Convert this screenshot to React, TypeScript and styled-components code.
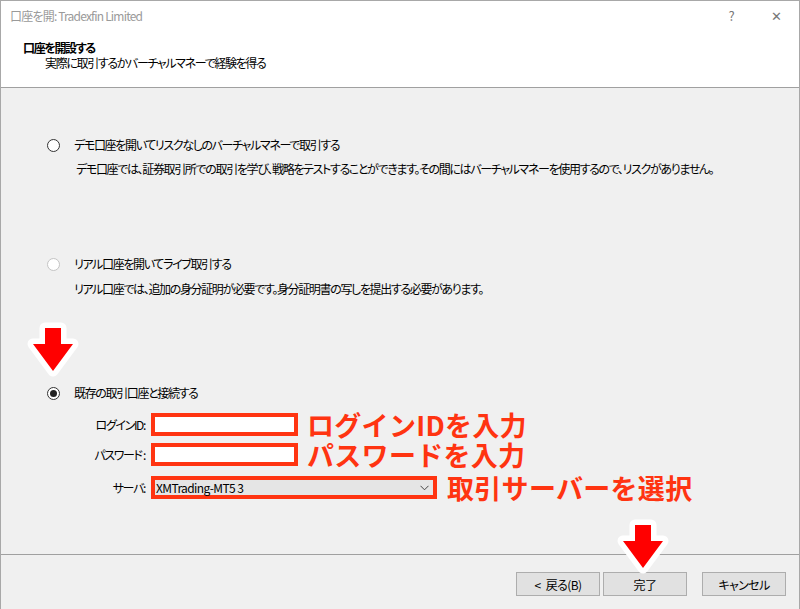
import React from 'react';
import styled, { createGlobalStyle } from 'styled-components';

const GlobalStyle = createGlobalStyle`
  html, body {
    margin: 0;
    padding: 0;
    background: #ffffff;
  }
  * {
    box-sizing: border-box;
  }
`;

const Window = styled.div`
  position: relative;
  width: 800px;
  height: 609px;
  display: flex;
  flex-direction: column;
  border: 1px solid #a8a8a8;
  border-bottom: none;
  font-family: 'Noto Sans CJK JP', 'Noto Sans', sans-serif;
  font-size: 12px;
  font-feature-settings: 'palt' 1;
  letter-spacing: -1.35px;
  color: #000;
  overflow: hidden;
`;

const TitleBar = styled.div`
  height: 29px;
  display: flex;
  align-items: center;
  justify-content: space-between;
  background: #fff;
  padding-left: 9px;
`;

const TitleText = styled.span`
  color: #9a9a9a;
  font-size: 12px;
  letter-spacing: -0.8px;
`;

const TitleControls = styled.div`
  display: flex;
  align-items: center;
`;

const ControlButton = styled.span`
  width: 45px;
  display: flex;
  justify-content: center;
  color: #777;
  font-size: 13px;
  letter-spacing: 0;
`;

const Header = styled.div`
  height: 58px;
  background: #fff;
  border-bottom: 1px solid #a0a0a0;
  padding: 10px 0 0 22px;
  line-height: 15px;
`;

const HeaderTitle = styled.div`
  font-weight: 700;
`;

const HeaderSub = styled.div`
  padding-left: 22px;
`;

const Body = styled.div`
  flex: 1;
  background: #f0f0f0;
  padding: 49px 0 0 46px;
  position: relative;
`;

const Option = styled.div<{ $top: number }>`
  margin-top: ${(p) => p.$top}px;
`;

const RadioRow = styled.label`
  display: flex;
  align-items: center;
  gap: 14px;
  height: 16px;
  line-height: 16px;
  white-space: nowrap;
`;

const Radio = styled.span<{ $checked?: boolean; $disabled?: boolean }>`
  width: 13px;
  height: 13px;
  flex: none;
  border-radius: 50%;
  border: 1px solid ${(p) => (p.$disabled ? '#c4c4c4' : '#333')};
  background: #fff;
  display: flex;
  align-items: center;
  justify-content: center;

  &::after {
    content: '';
    display: ${(p) => (p.$checked ? 'block' : 'none')};
    width: 7px;
    height: 7px;
    border-radius: 50%;
    background: #222;
  }
`;

const Description = styled.div<{ $indent: number; $top: number }>`
  margin-top: ${(p) => p.$top}px;
  padding-left: ${(p) => p.$indent}px;
  line-height: 16px;
  white-space: nowrap;
`;

const Form = styled.div`
  margin-top: 12px;
  margin-left: -1px;
  display: flex;
  flex-direction: column;
`;

const FormRow = styled.div<{ $top: number }>`
  display: flex;
  align-items: center;
  height: 23px;
  margin-top: ${(p) => p.$top}px;
`;

const FieldLabel = styled.span`
  width: 100px;
  text-align: right;
  padding-right: 1px;
  margin-right: 5px;
  white-space: nowrap;
`;

const RedBox = styled.div<{ $width: number; $fill?: string }>`
  width: ${(p) => p.$width}px;
  height: 23px;
  flex: none;
  border: 4px solid #ff3411;
  background: ${(p) => p.$fill || '#fff'};
  display: flex;
  align-items: center;
  justify-content: space-between;
  padding: 0 4px 0 1px;
  font-size: 12px;
  letter-spacing: -0.6px;
`;

const Annotation = styled.span<{ $left: number }>`
  margin-left: ${(p) => p.$left}px;
  color: #ff3411;
  font-size: 27px;
  font-weight: 700;
  line-height: 23px;
  letter-spacing: 0.3px;
  font-feature-settings: normal;
  white-space: nowrap;
`;

const Footer = styled.div`
  height: 55px;
  background: #f0f0f0;
  border-top: 1px solid #a0a0a0;
  display: flex;
  justify-content: flex-end;
  align-items: flex-start;
  padding: 17px 13px 0 0;
  position: relative;
`;

const Button = styled.button<{ $gap: number }>`
  width: 84px;
  height: 24px;
  margin-left: ${(p) => p.$gap}px;
  background: #e1e1e1;
  border: 1px solid #adadad;
  font-family: inherit;
  font-size: 12px;
  font-feature-settings: 'palt' 1;
  letter-spacing: -0.6px;
  word-spacing: 3px;
  color: #000;
  padding: 0;
`;

const ArrowWrap = styled.div<{ $x: number; $y: number }>`
  position: absolute;
  left: ${(p) => p.$x}px;
  top: ${(p) => p.$y}px;
  width: 60px;
  height: 63px;
  pointer-events: none;
`;

const DownArrow = ({ x, y }: { x: number; y: number }) => (
  <ArrowWrap $x={x} $y={y}>
    <svg width="60" height="63" viewBox="0 0 60 63">
      <polygon
        points="22,10 38,10 38,26 50,26 30,53 10,26 22,26"
        fill="#ff0000"
        stroke="#ffffff"
        strokeWidth="11"
        strokeLinejoin="round"
        paintOrder="stroke"
      />
    </svg>
  </ArrowWrap>
);

const Chevron = () => (
  <svg width="9" height="6" viewBox="0 0 9 6">
    <path d="M0.5 0.8 L4.5 4.8 L8.5 0.8" fill="none" stroke="#444" strokeWidth="1" />
  </svg>
);

export default function App() {
  return (
    <>
      <GlobalStyle />
      <Window>
        <TitleBar>
          <TitleText>口座を開: Tradexfin Limited</TitleText>
          <TitleControls>
            <ControlButton>?</ControlButton>
            <ControlButton>✕</ControlButton>
          </TitleControls>
        </TitleBar>
        <Header>
          <HeaderTitle>口座を開設する</HeaderTitle>
          <HeaderSub>実際に取引するかバーチャルマネーで経験を得る</HeaderSub>
        </Header>
        <Body>
          <Option $top={0}>
            <RadioRow>
              <Radio />
              デモ口座を開いてリスクなしのバーチャルマネーで取引する
            </RadioRow>
            <Description $indent={29} $top={8}>
              デモ口座では、証券取引所での取引を学び、戦略をテストすることができます。その間にはバーチャルマネーを使用するので、リスクがありません。
            </Description>
          </Option>
          <Option $top={79}>
            <RadioRow>
              <Radio $disabled />
              リアル口座を開いてライブ取引する
            </RadioRow>
            <Description $indent={27} $top={9}>
              リアル口座では、追加の身分証明が必要です。身分証明書の写しを提出する必要があります。
            </Description>
          </Option>
          <Option $top={88}>
            <RadioRow>
              <Radio $checked />
              既存の取引口座と接続する
            </RadioRow>
            <Form>
              <FormRow $top={0}>
                <FieldLabel>ログインID:</FieldLabel>
                <RedBox $width={147} />
                <Annotation $left={9}>ログインIDを入力</Annotation>
              </FormRow>
              <FormRow $top={7}>
                <FieldLabel>パスワード :</FieldLabel>
                <RedBox $width={147} />
                <Annotation $left={9}>パスワードを入力</Annotation>
              </FormRow>
              <FormRow $top={10}>
                <FieldLabel>サーバ:</FieldLabel>
                <RedBox $width={286} $fill="#e5e5e5">
                  <span>XMTrading-MT5 3</span>
                  <Chevron />
                </RedBox>
                <Annotation $left={10}>取引サーバーを選択</Annotation>
              </FormRow>
            </Form>
          </Option>
          <DownArrow x={22} y={230} />
        </Body>
        <Footer>
          <Button $gap={0}>&lt; 戻る(B)</Button>
          <Button $gap={3}>完了</Button>
          <Button $gap={15}>キャンセル</Button>
          <DownArrow x={612} y={-40} />
        </Footer>
      </Window>
    </>
  );
}
